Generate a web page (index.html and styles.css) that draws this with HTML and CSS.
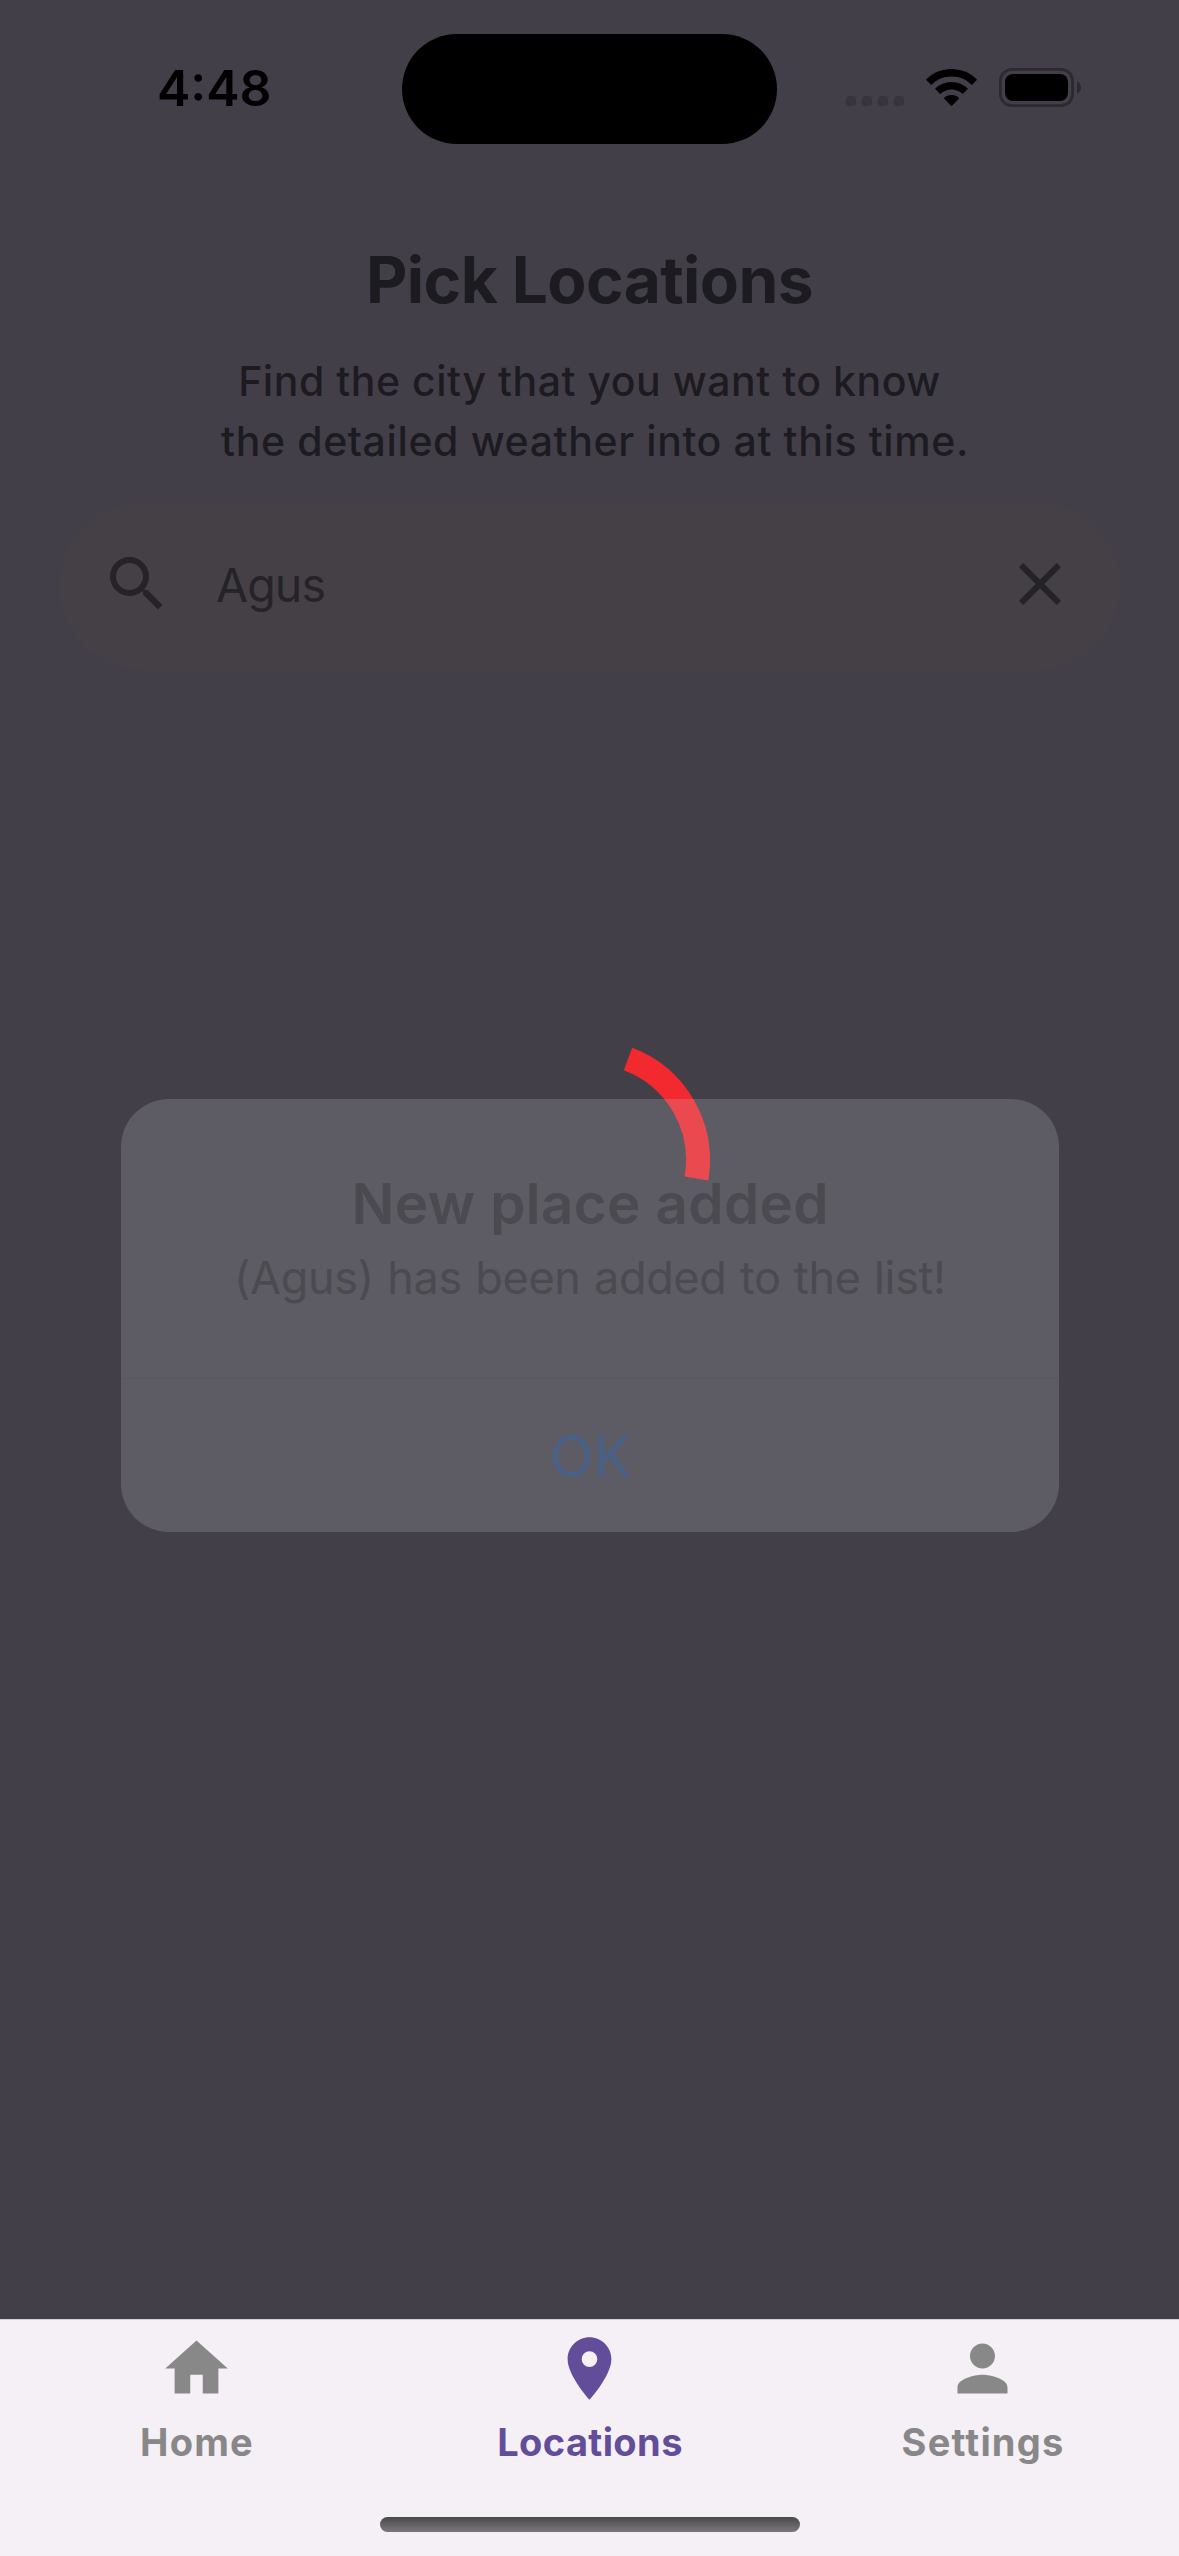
FILE: index.html
```html
<!DOCTYPE html>
<html lang="en">
<head>
<meta charset="utf-8">
<title>Pick Locations</title>
<link rel="stylesheet" href="styles.css">
</head>
<body>
<div class="screen">
  <header class="status">
    <div class="time">4:48</div>
    <div class="island"></div>
    <div class="indicators">
      <div class="signal"><i></i><i></i><i></i><i></i></div>
      <svg class="wifi" width="51" height="37" viewBox="0 0 51 37" aria-hidden="true">
        <path d="M2.45 13.25A32.6 32.6 0 0 1 48.55 13.25M11.64 22.44A19.6 19.6 0 0 1 39.36 22.44" fill="none" stroke="#000" stroke-width="7.5"/>
        <path d="M25.5 37.2L17.7 29.2A11.2 11.2 0 0 1 33.3 29.2Z"/>
      </svg>
      <svg class="battery" width="83" height="39" viewBox="0 0 83 39" aria-hidden="true">
        <rect x="1.4" y="1.4" width="72.2" height="36.2" rx="11.6" fill="none" stroke="#2c2931" stroke-width="2.8"/>
        <rect x="6" y="6" width="63" height="27" rx="8"/>
        <path d="M78 13.3C80.500 14.300 82 16.700 82 19.500S80.500 24.700 78 25.700Z" fill="#2c2931"/>
      </svg>
    </div>
  </header>

  <main class="content">
    <h1 class="title">Pick Locations</h1>
    <p class="subtitle"><span class="line">Find the city that you want to know</span><span class="line line-second">the detailed weather into at this time.</span></p>
    <div class="search">
      <svg width="72" height="72" viewBox="0 0 24 24" fill="#252328" aria-hidden="true"><path d="M15.500 14h-.79l-.28-.27A6.471 6.471 0 0 0 16 9.500 6.500 6.500 0 1 0 9.500 16c1.610 0 3.090-.59 4.230-1.570l.27.28v.79l5 4.990L20.490 19l-4.990-5zm-6 0C7.010 14 5 11.990 5 9.500S7.010 5 9.500 5 14 7.010 14 9.500 11.990 14 9.500 14z"/></svg>
      <span class="query">Agus</span>
      <svg width="72" height="72" viewBox="0 0 24 24" fill="#252328" aria-hidden="true"><path d="M19 6.410L17.590 5 12 10.590 6.410 5 5 6.410 10.590 12 5 17.590 6.410 19 12 13.410 17.590 19 19 17.590 13.410 12z"/></svg>
    </div>
  </main>

  <nav class="tabs">
    <div class="tab-row">
      <div class="tab">
        <svg width="75" height="75" viewBox="0 0 24 24" aria-hidden="true"><path d="M10 20v-6h4v6h5v-8h3L12 3 2 12h3v8z"/></svg>
        <span class="label">Home</span>
      </div>
      <div class="tab active">
        <svg width="75" height="75" viewBox="0 0 24 24" aria-hidden="true"><path d="M12 2C8.130 2 5 5.130 5 9c0 5.250 7 13 7 13s7-7.750 7-13c0-3.870-3.130-7-7-7zm0 9.500a2.500 2.500 0 0 1 0-5 2.500 2.500 0 0 1 0 5z"/></svg>
        <span class="label label-tight">Locations</span>
      </div>
      <div class="tab">
        <svg width="75" height="75" viewBox="0 0 24 24" aria-hidden="true"><path d="M12 12c2.210 0 4-1.790 4-4s-1.790-4-4-4-4 1.790-4 4 1.790 4 4 4zm0 2c-2.670 0-8 1.340-8 4v2h16v-2c0-2.660-5.330-4-8-4z"/></svg>
        <span class="label">Settings</span>
      </div>
    </div>
    <div class="home-bar"></div>
  </nav>

  <svg class="spinner" width="240" height="240" viewBox="-120 -120 240 240" aria-hidden="true">
    <path d="M38 -101.100A108 108 0 0 1 106.400 18.500" fill="none" stroke="#f2292f" stroke-width="24"/>
  </svg>

  <section class="alert">
    <div class="alert-body">
      <h2 class="alert-title">New place added</h2>
      <p class="alert-message">(Agus) has been added to the list!</p>
    </div>
    <div class="alert-action">OK</div>
  </section>
</div>
</body>
</html>
```
FILE: styles.css
```css
* { box-sizing: border-box; }

body {
  margin: 0;
  font-family: Inter, "Liberation Sans", sans-serif;
}

h1, h2, p { margin: 0; }

svg { display: block; }

.screen {
  position: relative;
  display: flex;
  flex-direction: column;
  width: 1179px;
  height: 2556px;
  overflow: hidden;
  background: #433f49;
}

/* Status bar */
.status {
  display: grid;
  grid-template-columns: 402px 375px 402px;
  height: 240px;
  padding-top: 34px;
}

.time {
  padding: 24px 0 0 157px;
  font-size: 50px;
  font-weight: 600;
  line-height: 60px;
  color: #000;
}

.island {
  height: 110px;
  border-radius: 55px;
  background: #000;
}

.indicators {
  display: flex;
  align-items: flex-start;
  padding: 34px 0 0 69px;
}

.signal {
  display: flex;
  gap: 6px;
  margin: 28px 22px 0 0;
}

.signal i {
  width: 10px;
  height: 10px;
  border-radius: 3px;
  background: #37343b;
}

.wifi { margin: 1px 22px 0 0; }

/* Page content */
.content {
  flex: 1;
  display: flex;
  flex-direction: column;
  padding: 0 59px;
  text-align: center;
  color: #1c1b1f;
}

.title {
  font-size: 64px;
  font-weight: 700;
  line-height: 79px;
  letter-spacing: -0.59px;
}

.subtitle {
  margin: 32px 0 31px;
  font-size: 41px;
  font-weight: 500;
  line-height: 60px;
  letter-spacing: 0.53px;
}

.line { display: block; }

.line-second {
  padding-left: 11px;
  letter-spacing: 0.62px;
}

.search {
  display: flex;
  align-items: center;
  height: 168px;
  padding: 0 44px 4px 42px;
  border-radius: 84px;
  background: #444046;
}

.query {
  flex: 1;
  padding: 2px 0 0 43px;
  font-size: 46.5px;
  line-height: 56px;
  letter-spacing: -0.9px;
  text-align: left;
  color: #252328;
}

/* Tab bar */
.tabs {
  display: flex;
  flex-direction: column;
  justify-content: space-between;
  height: 237px;
  padding: 11px 0 24px;
  border-top: 1px solid #d0ccd1;
  background: #f5f0f5;
}

.tab-row { display: flex; }

.tab {
  flex: 1;
  display: flex;
  flex-direction: column;
  align-items: center;
  gap: 13px;
  color: #888;
  fill: #888;
}

.tab.active {
  color: #624d9b;
  fill: #624d9b;
}

.label {
  padding-left: 1px;
  font-size: 38px;
  font-weight: 700;
  line-height: 46px;
  letter-spacing: 1.2px;
}

.label-tight { letter-spacing: 0.4px; }

.home-bar {
  align-self: center;
  width: 420px;
  height: 15px;
  border-radius: 7.5px;
  background: linear-gradient(#4a484a, #7b787b);
}

/* Loading spinner and fading alert, layered above the page */
.spinner {
  position: absolute;
  top: 1039.5px;
  left: 469.7px;
}

.alert {
  position: absolute;
  top: 1099px;
  left: 120.5px;
  width: 938.5px;
  height: 433px;
  border-radius: 48px;
  text-align: center;
  color: #4b4a50;
  background: rgba(205, 211, 216, 0.195);
}

.alert-body {
  height: 280px;
  padding-top: 70px;
  border-bottom: 1px solid rgba(60, 56, 66, 0.09);
}

.alert-title {
  padding-left: 1px;
  font-size: 56.5px;
  font-weight: 600;
  line-height: 69px;
  letter-spacing: 0.38px;
}

.alert-message {
  margin-top: 12px;
  font-size: 45px;
  line-height: 55px;
  letter-spacing: -0.35px;
  word-spacing: 1.2px;
}

.alert-action {
  padding: 43px 0 0 2px;
  font-size: 57px;
  line-height: 69px;
  color: #4a6186;
}
```
